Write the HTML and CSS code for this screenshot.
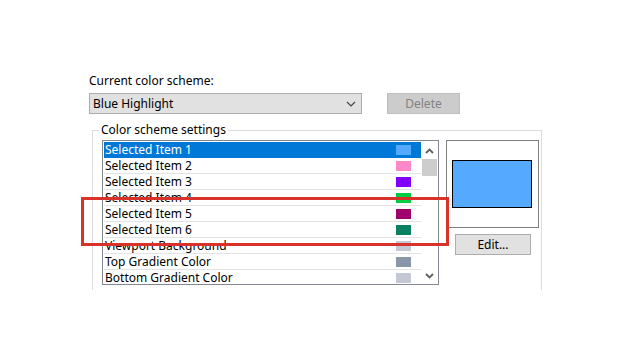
FILE: index.html
```html
<!DOCTYPE html>
<html>
<head>
<meta charset="utf-8">
<link rel="stylesheet" href="styles.css">
</head>
<body>
<div class="page">
  <div class="label">Current color scheme:</div>
  <div class="scheme-row">
    <div class="combo">
      <span>Blue Highlight</span>
      <svg class="chev" width="10" height="6" viewBox="0 0 10 6"><path d="M1 1 L5 5 L9 1" fill="none" stroke="#444" stroke-width="1.2"/></svg>
    </div>
    <div class="btn disabled">Delete</div>
  </div>
  <fieldset class="group">
    <legend>Color scheme settings</legend>
    <div class="group-body">
      <div class="listbox">
        <div class="rows">
          <div class="row sel"><span>Selected Item 1</span><i class="sw" style="background:#55aaff"></i></div>
          <div class="row"><span>Selected Item 2</span><i class="sw" style="background:#ff88c8"></i></div>
          <div class="row"><span>Selected Item 3</span><i class="sw" style="background:#8000ff"></i></div>
          <div class="row"><span>Selected Item 4</span><i class="sw" style="background:#00cc44"></i></div>
          <div class="row"><span>Selected Item 5</span><i class="sw" style="background:#a0006e"></i></div>
          <div class="row"><span>Selected Item 6</span><i class="sw" style="background:#0a8060"></i></div>
          <div class="row"><span>Viewport Background</span><i class="sw" style="background:#c4c8d4"></i></div>
          <div class="row"><span>Top Gradient Color</span><i class="sw" style="background:#8a96aa"></i></div>
          <div class="row"><span>Bottom Gradient Color</span><i class="sw" style="background:#c4c8d4"></i></div>
        </div>
        <div class="scrollbar">
          <svg class="arrow" width="9" height="6" viewBox="0 0 9 6"><path d="M1 5 L4.5 1.5 L8 5" fill="none" stroke="#606060" stroke-width="1.8"/></svg>
          <div class="thumb"></div>
          <div class="track"></div>
          <svg class="arrow" width="9" height="6" viewBox="0 0 9 6"><path d="M1 1 L4.5 4.5 L8 1" fill="none" stroke="#606060" stroke-width="1.8"/></svg>
        </div>
      </div>
      <div class="side">
        <div class="preview"><div class="preview-color"></div></div>
        <div class="btn edit">Edit...</div>
      </div>
    </div>
  </fieldset>
  <div class="callout"></div>
</div>
</body>
</html>
```

FILE: styles.css
```css
html, body {
  margin: 0;
  padding: 0;
  background: #ffffff;
}
body {
  width: 640px;
  height: 360px;
  overflow: hidden;
  font-family: "Noto Sans", "Open Sans", sans-serif;
  font-size: 12px;
  color: #000;
}
.page {
  position: relative;
  padding: 73px 0 0 89px;
}
.label {
  height: 15px;
  line-height: 15px;
  margin-bottom: 5px;
}
.scheme-row {
  display: flex;
  gap: 25px;
}
.combo {
  box-sizing: border-box;
  width: 273px;
  height: 21px;
  background: #e1e1e1;
  border: 1px solid #adadad;
  display: flex;
  align-items: center;
  justify-content: space-between;
  padding: 0 5px 0 3px;
}
.chev { display: block; }
.btn {
  box-sizing: border-box;
  height: 21px;
  display: flex;
  align-items: center;
  justify-content: center;
  background: #e1e1e1;
  border: 1px solid #adadad;
}
.btn.disabled {
  width: 73px;
  background: #cccccc;
  border-color: #bfbfbf;
  color: #838383;
}
.group {
  box-sizing: border-box;
  margin: 9px 0 0 3px;
  width: 450px;
  height: 167px;
  padding: 2px 0 0 9px;
  border: 1px solid #dcdcdc;
  border-bottom: none;
}
.group legend {
  padding: 0 2px;
  margin-left: -3px;
  line-height: 14px;
}
.group-body {
  display: flex;
  gap: 7px;
  margin-top: 1px;
}
.listbox {
  box-sizing: border-box;
  width: 337px;
  height: 145px;
  border: 1px solid #828790;
  display: flex;
  overflow: hidden;
}
.rows {
  flex: 1;
  padding: 1px 0 0 1px;
}
.row {
  box-sizing: border-box;
  height: 16px;
  display: flex;
  align-items: center;
  justify-content: space-between;
  padding: 0 10px 0 1px;
  border-bottom: 1px solid #e3e3e3;
}
.row span { line-height: 15px; }
.row.sel {
  background: #0078d7;
  color: #ffffff;
  border-bottom-color: #0078d7;
}
.sw {
  display: block;
  width: 15px;
  height: 10px;
}
.scrollbar {
  width: 17px;
  display: flex;
  flex-direction: column;
  align-items: center;
  padding-top: 7px;
}
.arrow { display: block; }
.thumb {
  width: 15px;
  height: 17px;
  background: #cdcdcd;
  margin-top: 5px;
}
.track { flex: 1; }
.scrollbar .arrow:last-child { margin-bottom: 5px; }
.side {
  display: flex;
  flex-direction: column;
  align-items: flex-start;
}
.preview {
  box-sizing: border-box;
  width: 93px;
  height: 88px;
  border: 1px solid #808080;
  padding: 19px 0 0 5px;
}
.preview-color {
  box-sizing: border-box;
  width: 80px;
  height: 48px;
  background: #55aaff;
  border: 1px solid #000;
}
.btn.edit {
  width: 76px;
  height: 21px;
  margin: 6px 0 0 9px;
}
.callout {
  position: absolute;
  left: 81px;
  top: 197px;
  width: 362px;
  height: 43px;
  border: 3px solid #d9322a;
}
```
